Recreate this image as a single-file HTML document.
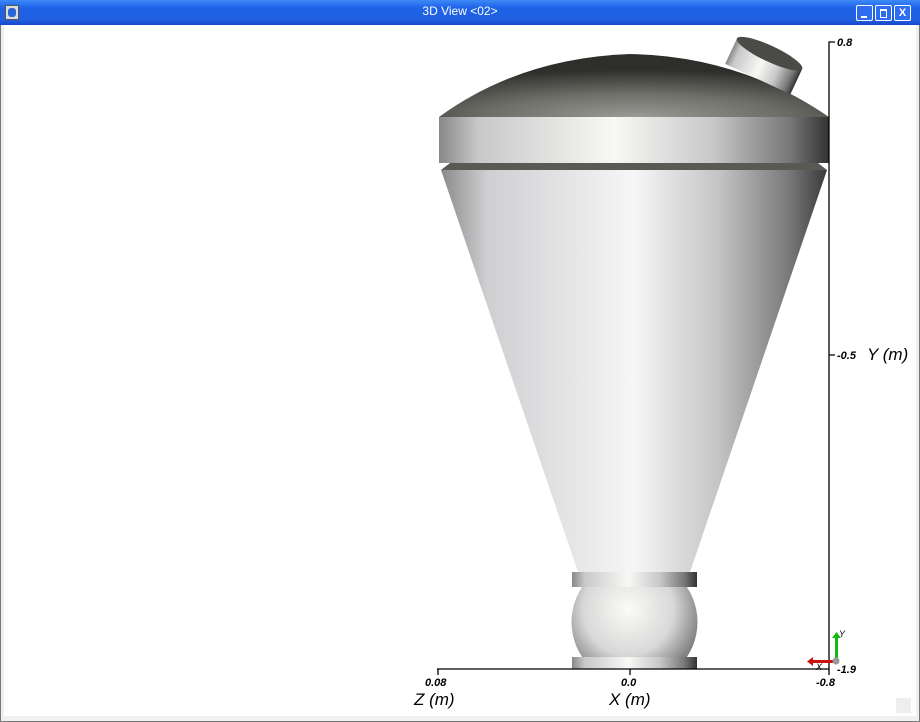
<!DOCTYPE html><html><head><style>
body{margin:0;width:920px;height:722px;overflow:hidden;background:#f0f0f0;font-family:"Liberation Sans",sans-serif}
.t{position:absolute;left:0;top:0;width:920px;height:25px;background:linear-gradient(#3d8af7,#1f63e8 30%,#2060e0 80%,#1447c8);}
</style></head><body>
<div style="position:absolute;left:0;top:0;width:920px;height:722px;background:#f0f0f0;border:1px solid #777;box-sizing:border-box"></div>
<div class="t"></div>
<div style="position:absolute;left:5px;top:5px;width:14px;height:15px;background:#ddd;border:1px solid #555;box-sizing:border-box"><div style="margin:2px auto;width:8px;height:9px;border-radius:3px;background:#2a64d8"></div></div>
<div style="position:absolute;left:0;top:4px;width:920px;text-align:center;color:#fff;font-size:12px">3D View &lt;02&gt;</div>
<div style="position:absolute;left:856px;top:5px;width:17px;height:16px;background:#2d6ef0;border:1px solid #fff;border-radius:2px;box-sizing:border-box"><div style="position:absolute;left:4px;top:10px;width:6px;height:2px;background:#fff"></div></div>
<div style="position:absolute;left:875px;top:5px;width:17px;height:16px;background:#2d6ef0;border:1px solid #fff;border-radius:2px;box-sizing:border-box"><div style="position:absolute;left:4px;top:3px;width:5px;height:6px;border:1px solid #fff;border-top-width:2px"></div></div>
<div style="position:absolute;left:894px;top:5px;width:17px;height:16px;background:#2d6ef0;border:1px solid #fff;border-radius:2px;box-sizing:border-box;color:#fff;font-size:11px;font-weight:bold;text-align:center;line-height:14px">X</div>
<div style="position:absolute;left:4px;top:25px;width:912px;height:691px;background:#fff"></div>
<div style="position:absolute;left:896px;top:698px;width:15px;height:15px;background:#eee"></div>
<svg width="920" height="722" style="position:absolute;left:0;top:0" font-family="Liberation Sans" font-style="italic">
<defs>
<linearGradient id="h" x1="0" x2="1"><stop offset="0" stop-color="#888"/><stop offset=".1" stop-color="#c8c8c8"/><stop offset=".45" stop-color="#f8f8f6"/><stop offset=".7" stop-color="#c8c8c8"/><stop offset=".9" stop-color="#777"/><stop offset="1" stop-color="#333"/></linearGradient>
<linearGradient id="c" x1="0" x2="1"><stop offset="0" stop-color="#8a8a8a"/><stop offset=".12" stop-color="#cfcfd2"/><stop offset=".5" stop-color="#f6f6f6"/><stop offset=".72" stop-color="#c4c4c4"/><stop offset=".9" stop-color="#7a7a7a"/><stop offset="1" stop-color="#3a3a3a"/></linearGradient>
<radialGradient id="d" cx=".5" cy="1" r=".75"><stop offset="0" stop-color="#9a9a96"/><stop offset=".5" stop-color="#6e6e68"/><stop offset="1" stop-color="#2e2e2b"/></radialGradient>
<radialGradient id="s" cx=".45" cy=".4" r=".6"><stop offset="0" stop-color="#fbfbf8"/><stop offset=".6" stop-color="#d8d8d8"/><stop offset="1" stop-color="#7a7a7a"/></radialGradient>
<clipPath id="sc"><rect x="560" y="587" width="150" height="70"/></clipPath>
</defs>
<path d="M439 117 Q520 58 630 54 Q740 56 829 117Z" fill="url(#d)"/>
<g transform="rotate(25 762 70)"><rect x="726" y="52" width="72" height="28" fill="url(#h)"/><ellipse cx="762" cy="52" rx="36" ry="8" fill="#4a4a46"/></g>
<rect x="439" y="117" width="390" height="46" fill="url(#h)"/>
<path d="M450 163 L818 163 L827 170 L441 170Z" fill="#5a5a55"/>
<path d="M441 170 L827 170 L690 572 L578 572Z" fill="url(#c)"/>
<rect x="572" y="572" width="125" height="15" fill="url(#h)"/>
<circle cx="634.5" cy="622" r="63" fill="url(#s)" clip-path="url(#sc)"/>
<rect x="572" y="657" width="125" height="12" fill="url(#h)"/>
<g stroke="#000" stroke-width="1.3" fill="none"><path d="M437 669H829V42H835M438 669v6M630 669v6M829 669v6M829 355h6"/></g>
<g font-size="11" font-weight="bold" fill="#000">
<text x="837" y="46">0.8</text><text x="837" y="359">-0.5</text><text x="837" y="673">-1.9</text>
<text x="425" y="686">0.08</text><text x="621" y="686">0.0</text><text x="816" y="686">-0.8</text></g>
<g font-size="17" fill="#000"><text x="867" y="360">Y (m)</text><text x="414" y="705">Z (m)</text><text x="609" y="705">X (m)</text></g>
<rect x="835" y="636" width="3" height="24" fill="#11bb11"/><path d="M832 638l4.5-6 4.5 6z" fill="#11bb11"/>
<rect x="812" y="660" width="24" height="3" fill="#cc1111"/><path d="M813 657l-6 4.5 6 4.5z" fill="#cc1111"/>
<circle cx="836" cy="661" r="3.5" fill="#999"/>
<text x="839" y="637" font-size="9">Y</text><text x="816" y="670" font-size="9">X</text>
</svg>
</body></html>
